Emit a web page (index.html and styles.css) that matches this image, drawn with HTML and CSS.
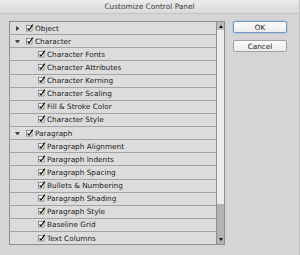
FILE: index.html
```html
<!DOCTYPE html>
<html lang="en">
<head>
  <meta charset="UTF-8" />
  <meta name="viewport" content="width=device-width, initial-scale=1.0" />
  <title>Customize Control Panel</title>

  <link rel="stylesheet" href="styles.css">
</head>
<body>

  <svg width="0" height="0" class="oculto">
    <symbol id="check" viewBox="0 0 8 8">
      <rect x="0.5" y="1.5" width="5.5" height="5.5" fill="#fbfbfb" stroke="#7d7d7d" stroke-width="0.8" />
      <path d="M1.6 4.3 L3 6 L6.8 0.6" fill="none" stroke="#111" stroke-width="1.2" />
    </symbol>
  </svg>

  <div class="ventana">
    <div class="titulo">Customize Control Panel</div>

    <div class="contenido">
      <div class="lista">
        <div class="filas">
          <div class="fila"><span class="flecha cerrada"></span><svg class="check"><use href="#check" /></svg>Object</div>
          <div class="fila"><span class="flecha abierta"></span><svg class="check"><use href="#check" /></svg>Character</div>
          <div class="fila hijo"><svg class="check"><use href="#check" /></svg>Character Fonts</div>
          <div class="fila hijo"><svg class="check"><use href="#check" /></svg>Character Attributes</div>
          <div class="fila hijo"><svg class="check"><use href="#check" /></svg>Character Kerning</div>
          <div class="fila hijo"><svg class="check"><use href="#check" /></svg>Character Scaling</div>
          <div class="fila hijo"><svg class="check"><use href="#check" /></svg>Fill &amp; Stroke Color</div>
          <div class="fila hijo"><svg class="check"><use href="#check" /></svg>Character Style</div>
          <div class="fila"><span class="flecha abierta"></span><svg class="check"><use href="#check" /></svg>Paragraph</div>
          <div class="fila hijo"><svg class="check"><use href="#check" /></svg>Paragraph Alignment</div>
          <div class="fila hijo"><svg class="check"><use href="#check" /></svg>Paragraph Indents</div>
          <div class="fila hijo"><svg class="check"><use href="#check" /></svg>Paragraph Spacing</div>
          <div class="fila hijo"><svg class="check"><use href="#check" /></svg>Bullets &amp; Numbering</div>
          <div class="fila hijo"><svg class="check"><use href="#check" /></svg>Paragraph Shading</div>
          <div class="fila hijo"><svg class="check"><use href="#check" /></svg>Paragraph Style</div>
          <div class="fila hijo"><svg class="check"><use href="#check" /></svg>Baseline Grid</div>
          <div class="fila hijo ultima"><svg class="check"><use href="#check" /></svg>Text Columns</div>
        </div>

        <div class="scroll">
          <div class="scroll_arriba"><span class="tri_arriba"></span></div>
          <div class="scroll_pista"></div>
          <div class="scroll_barra"><span class="tri_abajo"></span></div>
        </div>
      </div>

      <div class="botones">
        <button class="boton defecto">OK</button>
        <button class="boton">Cancel</button>
      </div>
    </div>
  </div>

</body>
</html>
```

FILE: styles.css
```css
* {
  box-sizing: border-box;
}

body {
  margin: 0;
  padding: 0;
  font-family: "DejaVu Sans", Verdana, sans-serif;
  background-color: #d4d4d4;
}

.oculto {
  position: absolute;
}

.ventana {
  width: 300px;
  height: 255px;
  background-color: #d5d5d5;
  border-right: 1px solid #c2c2c2;
}

.titulo {
  height: 14px;
  line-height: 14px;
  text-align: center;
  font-size: 7.4px;
  color: #3c3c3c;
  background: linear-gradient(#ebebeb, #dadada);
  border-bottom: 1px solid #c4c4c4;
}

.contenido {
  display: flex;
  padding: 7px 0 0 9px;
}

.lista {
  display: flex;
  width: 216px;
  height: 224px;
  border: 1px solid #8e8e8e;
  background-color: #dcdcdc;
}

.filas {
  flex: 1;
}

.fila {
  display: flex;
  align-items: center;
  height: 13.125px;
  padding-left: 5px;
  font-size: 7.3px;
  color: #1c1c1c;
  border-bottom: 1px solid #a3a3a3;
  white-space: nowrap;
}

.fila.hijo {
  padding-left: 28px;
}

.fila.ultima {
  border-bottom: none;
}

.flecha {
  display: inline-block;
  width: 4px;
  height: 5px;
  margin-right: 7px;
}

.flecha.cerrada {
  border-left: 3px solid #444;
  border-top: 2.5px solid transparent;
  border-bottom: 2.5px solid transparent;
  margin-left: 1px;
  margin-right: 6px;
}

.flecha.abierta {
  width: 5px;
  height: 3px;
  border-top: 3px solid #444;
  border-left: 2.5px solid transparent;
  border-right: 2.5px solid transparent;
  margin-right: 6px;
}

.check {
  width: 8px;
  height: 8px;
  margin-right: 1px;
  margin-top: -1px;
}

.scroll {
  display: flex;
  flex-direction: column;
  width: 8px;
  border-left: 1px solid #8e8e8e;
}

.scroll_arriba {
  display: flex;
  justify-content: center;
  align-items: center;
  height: 8px;
  background-color: #bdbdbd;
}

.scroll_pista {
  flex: 1;
  background-color: #ececec;
}

.scroll_barra {
  display: flex;
  justify-content: center;
  align-items: flex-end;
  height: 40px;
  padding-bottom: 3px;
  background-color: #b3b3b3;
}

.tri_arriba {
  border-bottom: 3px solid #111;
  border-left: 2px solid transparent;
  border-right: 2px solid transparent;
}

.tri_abajo {
  border-top: 3px solid #111;
  border-left: 2px solid transparent;
  border-right: 2px solid transparent;
}

.botones {
  display: flex;
  flex-direction: column;
  gap: 7px;
  margin-left: 8px;
}

.boton {
  width: 54px;
  height: 12px;
  padding: 0;
  font-family: "DejaVu Sans", Verdana, sans-serif;
  font-size: 7.3px;
  color: #1c1c1c;
  background: linear-gradient(#fbfbfb, #ececec);
  border: 1px solid #a2a2a2;
  border-radius: 2px;
}

.boton.defecto {
  border-color: #7598c6;
  box-shadow: 0 0 0 0.5px #9db7db;
}
```
